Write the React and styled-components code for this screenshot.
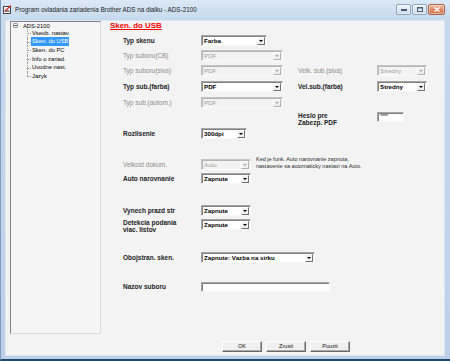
import styled, { createGlobalStyle } from "styled-components";

const GlobalStyle = createGlobalStyle`
  html, body {
    margin: 0;
    padding: 0;
    background: #f3f3f3;
  }
  body {
    font-family: "Liberation Sans", Arial, sans-serif;
  }
`;

const Window = styled.div`
  width: 450px;
  height: 361px;
  box-sizing: border-box;
  display: flex;
  flex-direction: column;
  background: linear-gradient(#dce8f5, #c6d9ed 20px, #bcd1e9);
  border-left: 1px solid #7f9dbd;
  border-bottom: 2px solid #1f4b69;
  overflow: hidden;
`;

const TitleBar = styled.div`
  height: 20px;
  flex: none;
  display: flex;
  align-items: flex-start;
  padding: 0 5px 0 2px;
`;

const AppIcon = styled.svg`
  margin-top: 5px;
  flex: none;
`;

const Title = styled.span`
  flex: 1;
  margin-left: 3px;
  font-size: 6.3px;
  line-height: 20px;
  color: #1b1b1b;
  white-space: nowrap;
`;

const CaptionButtons = styled.div`
  display: flex;
  gap: 1px;
  margin-top: 4px;
`;

const CaptionButton = styled.div`
  width: ${(p) => p.$w}px;
  height: 11px;
  box-sizing: border-box;
  border-radius: 2px;
  border: 1px solid ${(p) => (p.$close ? "#a9634d" : "#8ea3bd")};
  background: ${(p) =>
    p.$close
      ? "linear-gradient(#efc0a8, #dd8a66 50%, #cf7552)"
      : "linear-gradient(#f1f5fa, #dde7f2 50%, #cfdcec)"};
  display: flex;
  align-items: center;
  justify-content: center;
  box-shadow: inset 0 0 0 1px rgba(255, 255, 255, 0.45);
`;

const Content = styled.div`
  flex: 1;
  margin: 0 5px 3px 4px;
  box-sizing: border-box;
  border: 1px solid #dde6f1;
  background: #f3f3f3;
  display: flex;
  flex-direction: column;
  padding: 0 0 0 4px;
`;

const TopArea = styled.div`
  display: flex;
  height: 313px;
`;

const Tree = styled.div`
  width: 91px;
  height: 313px;
  box-sizing: border-box;
  flex: none;
  border: 1px solid;
  border-color: #838383 #dadada #dadada #838383;
  background: #f5f5f5;
  font-size: 5.8px;
  color: #000;
`;

const TreeRoot = styled.div`
  display: flex;
  align-items: center;
  height: 7px;
  padding-left: 2px;
  gap: 5px;
`;

const Expander = styled.span`
  width: 5px;
  height: 5px;
  box-sizing: border-box;
  border: 1px solid #9a9a9a;
  border-radius: 1px;
  background: #fff;
  display: flex;
  align-items: center;
  justify-content: center;
  &::after {
    content: "";
    width: 3px;
    height: 1px;
    background: #555;
  }
`;

const TreeChildren = styled.div`
  margin-left: 16px;
`;

const TreeItem = styled.div`
  position: relative;
  height: 8.6px;
  padding-left: 4px;
  display: flex;
  align-items: center;
  &::before {
    content: "";
    position: absolute;
    left: 0;
    top: 0;
    height: ${(p) => (p.$last ? "50%" : "100%")};
    border-left: 1px dotted #9c9c9c;
  }
  &::after {
    content: "";
    position: absolute;
    left: 0;
    top: 50%;
    width: 4px;
    border-top: 1px dotted #9c9c9c;
  }
`;

const TreeLabel = styled.span`
  display: inline-block;
  line-height: 9px;
  padding: 0 1px;
  white-space: nowrap;
  background: ${(p) => (p.$selected ? "#3399ff" : "transparent")};
  color: ${(p) => (p.$selected ? "#fff" : "#000")};
`;

const Main = styled.div`
  flex: 1;
  margin-left: 9px;
  display: flex;
  flex-direction: column;
`;

const Heading = styled.div`
  font-size: 7.9px;
  line-height: 9px;
  height: 9px;
  font-weight: bold;
  color: #f00;
  text-decoration: underline;
`;

const Form = styled.div`
  display: flex;
  flex-direction: column;
  padding-left: 13px;
`;

const Row = styled.div`
  display: grid;
  grid-template-columns: 78px 97px 79px auto;
  height: ${(p) => p.$h || 11}px;
  margin-top: ${(p) => p.$mt}px;
  align-items: ${(p) => p.$align || "center"};
`;

const Label = styled.span`
  font-size: 6.5px;
  line-height: 7.3px;
  font-weight: ${(p) => (p.$muted ? "normal" : "bold")};
  color: ${(p) => (p.$muted ? "#8c8c8c" : "#1c1c26")};
  white-space: nowrap;
`;

const Cell = styled.div`
  display: flex;
  align-items: flex-start;
  gap: 5px;
  grid-column: ${(p) => p.$span || "auto"};
`;

const SelectBox = styled.div`
  width: ${(p) => p.$w}px;
  height: 11px;
  box-sizing: border-box;
  flex: none;
  display: flex;
  background: ${(p) => (p.$disabled ? "#f3f3f3" : "#fff")};
  border: 1px solid;
  border-color: ${(p) =>
    p.$disabled
      ? "#c4c4c4 #fbfbfb #fbfbfb #c4c4c4"
      : "#a6a6a6 #f9f9f9 #f9f9f9 #a6a6a6"};
  box-shadow: inset 1px 1px 0 ${(p) => (p.$disabled ? "#b4b4b4" : "#808080")};
`;

const SelectValue = styled.span`
  flex: 1;
  padding-left: 2px;
  padding-top: 1px;
  font-size: 6.2px;
  line-height: 8px;
  font-weight: ${(p) => (p.$disabled ? "normal" : "bold")};
  color: ${(p) => (p.$disabled ? "#a2a2a2" : "#000")};
  white-space: nowrap;
  overflow: hidden;
`;

const DropButton = styled.span`
  width: 8px;
  box-sizing: border-box;
  margin: 1px 1px 0 0;
  background: #f0f0f0;
  border: 1px solid;
  border-color: ${(p) =>
    p.$disabled
      ? "#fdfdfd #b0b0b0 #b0b0b0 #fdfdfd"
      : "#fdfdfd #6f6f6f #6f6f6f #fdfdfd"};
  display: flex;
  align-items: center;
  justify-content: center;
  &::after {
    content: "";
    border-left: 2px solid transparent;
    border-right: 2px solid transparent;
    border-top: 2px solid ${(p) => (p.$disabled ? "#a8a8a8" : "#000")};
  }
`;

const TextInput = styled.div`
  width: ${(p) => p.$w}px;
  height: 10px;
  box-sizing: border-box;
  background: #fff;
  border: 1px solid;
  border-color: #a6a6a6 #f9f9f9 #f9f9f9 #a6a6a6;
  box-shadow: inset 1px 1px 0 #808080;
  font-size: 6px;
  line-height: 5px;
  padding: 1px 2px 0;
  letter-spacing: -0.4px;
  color: #333;
`;

const Note = styled.div`
  margin-top: -3px;
  font-size: 5.5px;
  line-height: 6.6px;
  color: #2a2a2a;
  white-space: nowrap;
`;

const Footer = styled.div`
  display: flex;
  gap: 4px;
  padding: 7px 0 0 212px;
`;

const Button = styled.button`
  width: 40px;
  height: 11px;
  box-sizing: border-box;
  padding: 0;
  background: #f0f0f0;
  border: 1px solid;
  border-color: #fff #6a6a6a #6a6a6a #fff;
  box-shadow: inset -1px -1px 0 #a9a9a9;
  font-family: "Liberation Sans", Arial, sans-serif;
  font-size: 5.6px;
  line-height: 9px;
  color: #111;
`;

function Select({ w, value, disabled }) {
  return (
    <SelectBox $w={w} $disabled={disabled}>
      <SelectValue $disabled={disabled}>{value}</SelectValue>
      <DropButton $disabled={disabled} />
    </SelectBox>
  );
}

const treeItems = [
  "Vseob. nastav.",
  "Sken. do USB",
  "Sken. do PC",
  "Info o zariad.",
  "Uvodne nast.",
  "Jazyk",
];

export default function App() {
  return (
    <>
      <GlobalStyle />
      <Window>
        <TitleBar>
          <AppIcon width="9" height="9" viewBox="0 0 9 9">
            <rect x="0.5" y="1.5" width="7" height="7" fill="#fff" stroke="#444" />
            <rect x="1.5" y="5" width="5" height="2" fill="#888" />
            <path d="M2 6 L8 0.5" stroke="#e02020" strokeWidth="1.2" />
          </AppIcon>
          <Title>Program ovladania zariadenia Brother ADS na dialku - ADS-2100</Title>
          <CaptionButtons>
            <CaptionButton $w={15}>
              <svg width="6" height="3" viewBox="0 0 6 3">
                <rect x="0" y="1" width="6" height="2" fill="#4a5a70" />
              </svg>
            </CaptionButton>
            <CaptionButton $w={15}>
              <svg width="6" height="5" viewBox="0 0 6 5">
                <rect x="0.5" y="0.5" width="5" height="4" fill="none" stroke="#4a5a70" />
                <rect x="0.5" y="0.5" width="5" height="1" fill="#4a5a70" />
              </svg>
            </CaptionButton>
            <CaptionButton $w={17} $close>
              <svg width="6" height="5" viewBox="0 0 6 5">
                <path d="M0.5 0.5 L5.5 4.5 M5.5 0.5 L0.5 4.5" stroke="#fff" strokeWidth="1.4" />
              </svg>
            </CaptionButton>
          </CaptionButtons>
        </TitleBar>

        <Content>
          <TopArea>
            <Tree>
              <TreeRoot>
                <Expander />
                <span>ADS-2100</span>
              </TreeRoot>
              <TreeChildren>
                {treeItems.map((t, i) => (
                  <TreeItem key={t} $last={i === treeItems.length - 1}>
                    <TreeLabel $selected={i === 1}>{t}</TreeLabel>
                  </TreeItem>
                ))}
              </TreeChildren>
            </Tree>

            <Main>
              <Heading>Sken. do USB</Heading>
              <Form>
                <Row $mt={5}>
                  <Label>Typ skenu</Label>
                  <Cell>
                    <Select w={66} value="Farba" />
                  </Cell>
                </Row>
                <Row $mt={4}>
                  <Label $muted>Typ suboru(CB)</Label>
                  <Cell>
                    <Select w={82} value="PDF" disabled />
                  </Cell>
                </Row>
                <Row $mt={4}>
                  <Label $muted>Typ suboru(siva)</Label>
                  <Cell>
                    <Select w={82} value="PDF" disabled />
                  </Cell>
                  <Label $muted>Velk. sub.(siva)</Label>
                  <Cell>
                    <Select w={50} value="Stredny" disabled />
                  </Cell>
                </Row>
                <Row $mt={5}>
                  <Label>Typ sub.(farba)</Label>
                  <Cell>
                    <Select w={82} value="PDF" />
                  </Cell>
                  <Label>Vel.sub.(farba)</Label>
                  <Cell>
                    <Select w={50} value="Stredny" />
                  </Cell>
                </Row>
                <Row $mt={5}>
                  <Label $muted>Typ sub.(autom.)</Label>
                  <Cell>
                    <Select w={82} value="PDF" disabled />
                  </Cell>
                </Row>
                <Row $mt={4} $align="start">
                  <span />
                  <span />
                  <Label>
                    Heslo pre
                    <br />
                    Zabezp. PDF
                  </Label>
                  <Cell>
                    <TextInput $w={27}>****</TextInput>
                  </Cell>
                </Row>
                <Row $mt={5}>
                  <Label>Rozlisenie</Label>
                  <Cell>
                    <Select w={46} value="300dpi" />
                  </Cell>
                </Row>
                <Row $mt={20}>
                  <Label $muted>Velkost dokum.</Label>
                  <Cell $span="2 / span 3">
                    <Select w={50} value="Auto" disabled />
                    <Note>
                      Ked je funk. Auto narovnanie zapnuta,
                      <br />
                      nastavenie sa automaticky nastavi na Auto.
                    </Note>
                  </Cell>
                </Row>
                <Row $mt={3}>
                  <Label>Auto narovnanie</Label>
                  <Cell>
                    <Select w={50} value="Zapnute" />
                  </Cell>
                </Row>
                <Row $mt={21}>
                  <Label>Vynech prazd str</Label>
                  <Cell>
                    <Select w={50} value="Zapnute" />
                  </Cell>
                </Row>
                <Row $mt={3} $align="start">
                  <Label>
                    Detekcia podania
                    <br />
                    viac. listov
                  </Label>
                  <Cell>
                    <Select w={50} value="Zapnute" />
                  </Cell>
                </Row>
                <Row $mt={22}>
                  <Label>Obojstran. sken.</Label>
                  <Cell $span="2 / span 3">
                    <Select w={114} value="Zapnute: Vazba na sirku" />
                  </Cell>
                </Row>
                <Row $mt={19} $h={10}>
                  <Label>Nazov suboru</Label>
                  <Cell $span="2 / span 3">
                    <TextInput $w={129} />
                  </Cell>
                </Row>
              </Form>
            </Main>
          </TopArea>

          <Footer>
            <Button>OK</Button>
            <Button>Zrusit</Button>
            <Button>Pouzit</Button>
          </Footer>
        </Content>
      </Window>
    </>
  );
}
